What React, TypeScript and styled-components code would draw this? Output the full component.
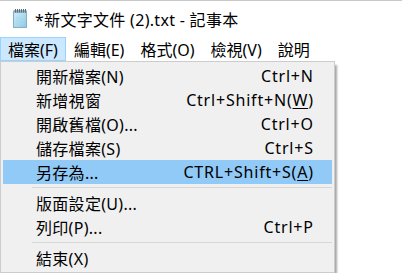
import React from "react";
import styled, { createGlobalStyle } from "styled-components";

const Global = createGlobalStyle`
  html, body { margin: 0; padding: 0; background: #ffffff; overflow: hidden; }
  #root { width: 402px; height: 273px; }
`;

const FONT = `"Noto Sans", "Noto Sans CJK TC", sans-serif`;

const Window = styled.div`
  position: relative;
  width: 402px;
  height: 273px;
  background: #ffffff;
  font-family: ${FONT};
  color: #000;
  overflow: hidden;
`;

const TitleBar = styled.div`
  height: 36px;
  box-sizing: border-box;
  border-top: 1px solid #c9c9c9;
  display: flex;
  align-items: center;
  padding-left: 12px;
  gap: 7px;
`;

const TitleText = styled.span`
  font-size: 16px;
  line-height: 20px;
  letter-spacing: 0.3px;
  margin-top: 3px;
`;

const MenuBar = styled.div`
  height: 25px;
  padding-top: 1px;
  box-sizing: border-box;
  display: flex;
`;

const MenuBarItem = styled.div<{ $open?: boolean }>`
  height: 24px;
  box-sizing: border-box;
  padding: 0 7px;
  display: flex;
  align-items: center;
  font-size: 16px;
  border: 1px solid ${(p) => (p.$open ? "#99d1ff" : "transparent")};
  background: ${(p) => (p.$open ? "#cce8ff" : "transparent")};
`;

const Editor = styled.div`
  flex: 1;
  background: #fff;
`;

const Dropdown = styled.div`
  position: absolute;
  left: 0;
  top: 61px;
  width: 335px;
  box-sizing: border-box;
  background: #f0f0f0;
  border: 1px solid #cccccc;
  padding: 2px 2px;
  box-shadow: 3px 3px 2px -1px rgba(0, 0, 0, 0.35);
`;

const Item = styled.div<{ $hot?: boolean }>`
  height: 24px;
  display: flex;
  align-items: center;
  justify-content: space-between;
  padding: 0 19px 0 33px;
  font-size: 16px;
  letter-spacing: 0.3px;
  background: ${(p) => (p.$hot ? "#91c9f7" : "transparent")};
`;

const Shortcut = styled.span`
  font-size: 16px;
  letter-spacing: 0.8px;
  margin-right: -0.8px;
`;

const U = styled.span`
  text-decoration: underline;
  text-underline-offset: 2px;
`;

const Separator = styled.div`
  height: 7px;
  display: flex;
  align-items: center;
  padding-left: 29px;
  &::after {
    content: "";
    flex: 1;
    height: 1px;
    background: #d7d7d7;
  }
`;

const NotepadIcon = () => (
  <svg width="16" height="19" viewBox="0 0 16 19">
    <defs>
      <linearGradient id="pad" x1="0" y1="0" x2="1" y2="1">
        <stop offset="0" stopColor="#cdeefa" />
        <stop offset="1" stopColor="#8cc8e4" />
      </linearGradient>
    </defs>
    <rect x="1.5" y="2.5" width="13" height="16" fill="url(#pad)" stroke="#86aec4" />
    <rect x="1.5" y="1" width="13" height="3" fill="#9bb2c0" />
    {[3, 5, 7, 9, 11, 13].map((x) => (
      <rect key={x} x={x} y="0" width="1" height="3.5" fill="#5a6e7a" />
    ))}
    <line x1="4" y1="9" x2="12" y2="9" stroke="#abd8ec" />
    <line x1="4" y1="12" x2="12" y2="12" stroke="#abd8ec" />
    <line x1="4" y1="15" x2="12" y2="15" stroke="#abd8ec" />
  </svg>
);

export default function App() {
  return (
    <>
      <Global />
      <Window>
        <TitleBar>
          <NotepadIcon />
          <TitleText>*新文字文件 (2).txt - 記事本</TitleText>
        </TitleBar>
        <MenuBar>
          <MenuBarItem $open>檔案(F)</MenuBarItem>
          <MenuBarItem>編輯(E)</MenuBarItem>
          <MenuBarItem>格式(O)</MenuBarItem>
          <MenuBarItem>檢視(V)</MenuBarItem>
          <MenuBarItem>說明</MenuBarItem>
        </MenuBar>
        <Editor />
        <Dropdown>
          <Item>
            <span>開新檔案(N)</span>
            <Shortcut>Ctrl+N</Shortcut>
          </Item>
          <Item>
            <span>新增視窗</span>
            <Shortcut>
              Ctrl+Shift+N(<U>W</U>)
            </Shortcut>
          </Item>
          <Item>
            <span>開啟舊檔(O)...</span>
            <Shortcut>Ctrl+O</Shortcut>
          </Item>
          <Item>
            <span>儲存檔案(S)</span>
            <Shortcut>Ctrl+S</Shortcut>
          </Item>
          <Item $hot>
            <span>另存為...</span>
            <Shortcut>
              CTRL+Shift+S(<U>A</U>)
            </Shortcut>
          </Item>
          <Separator />
          <Item>
            <span>版面設定(U)...</span>
          </Item>
          <Item>
            <span>列印(P)...</span>
            <Shortcut>Ctrl+P</Shortcut>
          </Item>
          <Separator />
          <Item>
            <span>結束(X)</span>
          </Item>
        </Dropdown>
      </Window>
    </>
  );
}
